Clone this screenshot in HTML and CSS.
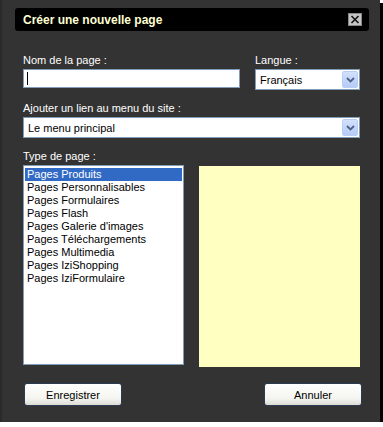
FILE: index.html
```html
<!DOCTYPE html>
<html lang="fr">
<head>
    <meta charset="UTF-8">
    <title>Créer une nouvelle page</title>
    <link rel="stylesheet" href="styles.css">
</head>
<body>
    <div class="window">
        <div class="titlebar">
            <span class="title">Créer une nouvelle page</span>
            <span class="close">
                <svg width="10" height="9" viewBox="0 0 10 9"><path d="M1.5 1 L8.5 8 M8.5 1 L1.5 8" stroke="#111" stroke-width="1.6"/></svg>
            </span>
        </div>

        <div class="form">
            <div class="row">
                <div class="field name-field">
                    <label>Nom de la page :</label>
                    <div class="textbox"><span class="caret"></span></div>
                </div>
                <div class="field lang-field">
                    <label>Langue :</label>
                    <div class="select">
                        <span class="value">Français</span>
                        <span class="arrow"><svg width="9" height="6" viewBox="0 0 9 6"><path d="M1 1 L4.5 4.5 L8 1" fill="none" stroke="#4d6185" stroke-width="1.8"/></svg></span>
                    </div>
                </div>
            </div>

            <div class="field">
                <label>Ajouter un lien au menu du site :</label>
                <div class="select">
                    <span class="value">Le menu principal</span>
                    <span class="arrow"><svg width="9" height="6" viewBox="0 0 9 6"><path d="M1 1 L4.5 4.5 L8 1" fill="none" stroke="#4d6185" stroke-width="1.8"/></svg></span>
                </div>
            </div>

            <div class="field">
                <label>Type de page :</label>
                <div class="row lists">
                    <ul class="listbox">
                        <li class="selected">Pages Produits</li>
                        <li>Pages Personnalisables</li>
                        <li>Pages Formulaires</li>
                        <li>Pages Flash</li>
                        <li>Pages Galerie d'images</li>
                        <li>Pages Téléchargements</li>
                        <li>Pages Multimedia</li>
                        <li>Pages IziShopping</li>
                        <li>Pages IziFormulaire</li>
                    </ul>
                    <div class="preview"></div>
                </div>
            </div>

            <div class="buttons">
                <button>Enregistrer</button>
                <button>Annuler</button>
            </div>
        </div>
    </div>
</body>
</html>
```

FILE: styles.css
```css
/* Dialog window */
body {
    margin: 0;
    background: #fff;
    font-family: 'Liberation Sans', Arial, sans-serif;
    font-size: 11px;
}

.window {
    box-sizing: border-box;
    width: 380px;
    height: 422px;
    background: #333;
    border-left: 2px solid #2a2a2a;
    box-shadow: 3px 3px 0 #000;
    padding-top: 8px;
}

.titlebar {
    display: flex;
    align-items: center;
    justify-content: space-between;
    height: 23px;
    margin: 0 11px 0 13px;
    padding: 0 7px 0 8px;
    background: #000;
    border-radius: 3px;
}

.title {
    color: #ffffd2;
    font-weight: bold;
    font-size: 12px;
}

.close {
    display: flex;
    align-items: center;
    justify-content: center;
    box-sizing: border-box;
    width: 14px;
    height: 13px;
    background: #c4c4c4;
    border: 1px solid #888;
}

.form {
    padding: 23px 0 0 21px;
    width: 337px;
}

.row {
    display: flex;
    gap: 15px;
}

.field label {
    display: block;
    color: #fff;
    line-height: 13px;
    margin-bottom: 2px;
}

.field {
    margin-bottom: 12px;
}

.name-field {
    width: 217px;
}

.lang-field {
    flex: 1;
}

.textbox {
    box-sizing: border-box;
    height: 19px;
    background: #fff;
    border: 1px solid #7f9db9;
    padding: 2px 3px;
}

.caret {
    display: block;
    width: 1px;
    height: 13px;
    background: #000;
}

.select {
    box-sizing: border-box;
    display: flex;
    align-items: center;
    justify-content: space-between;
    height: 21px;
    background: #fff;
    border: 1px solid #7f9db9;
    padding: 1px;
    color: #000;
}

.select .value {
    padding-left: 3px;
}

.arrow {
    display: flex;
    align-items: center;
    justify-content: center;
    box-sizing: border-box;
    width: 16px;
    height: 17px;
    background: linear-gradient(#d2e0fd, #b6cbf8);
    border: 1px solid #b9cdf5;
    border-radius: 2px;
}

.lists {
    gap: 15px;
    align-items: flex-start;
}

.listbox {
    box-sizing: border-box;
    width: 161px;
    height: 200px;
    margin: 0;
    padding: 2px 1px;
    list-style: none;
    background: #fff;
    border: 1px solid #7f9db9;
}

.listbox li {
    height: 13px;
    line-height: 13px;
    padding-left: 2px;
    color: #000;
    white-space: nowrap;
}

.listbox li.selected {
    background: #316ac5;
    color: #fff;
}

.preview {
    width: 161px;
    height: 201px;
    margin-top: 1px;
    background: #ffffc2;
}

.buttons {
    display: flex;
    justify-content: space-between;
    padding: 4px 0 0 1px;
    margin-right: -2px;
}

.buttons button {
    width: 98px;
    height: 23px;
    font-family: 'Liberation Sans', Arial, sans-serif;
    font-size: 11px;
    color: #000;
    background: linear-gradient(#ffffff, #f4f4ef 70%, #dcdcd4);
    border: 1px solid #2b3b55;
    border-radius: 3px;
    padding: 0;
}
```
